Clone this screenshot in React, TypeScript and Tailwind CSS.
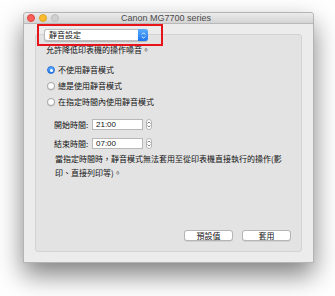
import React from "react";

const cjk = "font-['Noto_Sans_CJK_TC','Noto_Sans',sans-serif]";

function Radio({ checked, label }: { checked?: boolean; label: string }) {
  return (
    <div className="flex items-center h-[16px] gap-[3px] pl-[1px]">
      {checked ? (
        <div className="w-[8px] h-[8px] rounded-full bg-gradient-to-b from-[#5fb0ff] to-[#1c78f0] border border-[#2a6fd6] flex items-center justify-center">
          <div className="w-[3px] h-[3px] rounded-full bg-white" />
        </div>
      ) : (
        <div className="w-[8px] h-[8px] rounded-full bg-white border border-[#a6a6a6] shadow-[0_0.5px_0.5px_rgba(0,0,0,0.15)]" />
      )}
      <span className="text-[8px] leading-[10px] text-[#111]">{label}</span>
    </div>
  );
}

function Stepper() {
  return (
    <div className="w-[6px] h-[11px] rounded-[3px] bg-white border border-[#b5b5b5] flex flex-col items-center justify-center gap-[1px]">
      <svg width="4" height="3" viewBox="0 0 4 3">
        <path d="M0.5 2.5 L2 1 L3.5 2.5" fill="none" stroke="#666" strokeWidth="0.8" />
      </svg>
      <svg width="4" height="3" viewBox="0 0 4 3">
        <path d="M0.5 0.5 L2 2 L3.5 0.5" fill="none" stroke="#666" strokeWidth="0.8" />
      </svg>
    </div>
  );
}

function TimeRow({ label, value }: { label: string; value: string }) {
  return (
    <div className="flex items-center h-[11px] pl-[8px]">
      <span className="w-[38px] text-[8px] leading-[10px] text-[#111]">{label}</span>
      <div className="w-[51px] h-[11px] bg-white border border-[#b8b8b8] flex items-center pl-[3px]">
        <span className="text-[8px] leading-[10px] font-['Liberation_Sans',sans-serif] text-[#111]">{value}</span>
      </div>
      <div className="ml-[3px]">
        <Stepper />
      </div>
    </div>
  );
}

export default function App() {
  return (
    <div className={`w-[335px] h-[296px] bg-white pt-[12px] pl-[23px] overflow-hidden ${cjk}`}>
      <div className="relative w-[291px] h-[251px] bg-[#ececec] border border-[#b4b4b4] rounded-t-[3px] shadow-[0_12px_26px_rgba(0,0,0,0.5)] flex flex-col">
        {/* Title bar */}
        <div className="relative h-[11px] shrink-0 bg-gradient-to-b from-[#ebebeb] to-[#d4d4d4] border-b border-[#b9b9b9] rounded-t-[3px] flex items-center">
          <div className="flex items-center gap-[4px] pl-[3px]">
            <div className="w-[8px] h-[8px] rounded-full bg-[#fc5f57] border border-[#e0443e]" />
            <div className="w-[8px] h-[8px] rounded-full bg-[#fdbc2e] border border-[#dea123]" />
            <div className="w-[8px] h-[8px] rounded-full bg-[#d0d0d0] border border-[#bdbdbd]" />
          </div>
          <div className="flex-1 text-center pr-[40px] text-[9px] leading-[10px] text-[#4a4a4a] font-['Liberation_Sans',sans-serif]">
            Canon MG7700 series
          </div>
        </div>

        {/* Content */}
        <div className="flex-1 flex flex-col px-[11px] pb-[10px]">
          <div className="relative z-10 mt-[5px] pl-[9px] h-[12px]">
            <div className="w-[104px] h-[12px] bg-white rounded-[3px] border border-[#bdbdbd] shadow-[0_0.5px_1px_rgba(0,0,0,0.2)] flex items-center">
              <span className="flex-1 pl-[4px] text-[8px] leading-[10px] text-[#111]">靜音設定</span>
              <div className="w-[10px] h-[12px] -mr-[1px] rounded-r-[3px] bg-gradient-to-b from-[#5aaefd] to-[#1b73ee] flex flex-col items-center justify-center gap-[1px]">
                <svg width="5" height="3" viewBox="0 0 5 3">
                  <path d="M0.8 2.5 L2.5 0.8 L4.2 2.5" fill="none" stroke="#fff" strokeWidth="0.9" />
                </svg>
                <svg width="5" height="3" viewBox="0 0 5 3">
                  <path d="M0.8 0.5 L2.5 2.2 L4.2 0.5" fill="none" stroke="#fff" strokeWidth="0.9" />
                </svg>
              </div>
            </div>
          </div>

          <div className="-mt-[7px] flex-1 bg-[#e3e3e3] border border-[#d3d3d3] rounded-[3px] flex flex-col pt-[10px] pl-[10px] pr-[10px] pb-[10px]">
            <div className="text-[8px] leading-[10px] text-[#111]">允許降低印表機的操作噪音。</div>

            <div className="mt-[7px] flex flex-col">
              <Radio checked label="不使用靜音模式" />
              <Radio label="總是使用靜音模式" />
              <Radio label="在指定時間內使用靜音模式" />
            </div>

            <div className="mt-[9px] flex flex-col gap-[8px]">
              <TimeRow label="開始時間:" value="21:00" />
              <TimeRow label="結束時間:" value="07:00" />
            </div>

            <div className="mt-[3px] ml-[9px] text-[8px] leading-[13.5px] text-[#111] whitespace-nowrap">
              當指定時間時，靜音模式無法套用至從印表機直接執行的操作(影
              <br />
              印、直接列印等)。
            </div>

            <div className="mt-auto flex justify-end gap-[9px]">
              <button className="w-[49px] h-[11px] bg-white border border-[#b5b5b5] rounded-[3px] shadow-[0_0.5px_0.5px_rgba(0,0,0,0.15)] text-[8px] leading-[9px] text-[#111]">
                預設值
              </button>
              <button className="w-[49px] h-[11px] bg-white border border-[#b5b5b5] rounded-[3px] shadow-[0_0.5px_0.5px_rgba(0,0,0,0.15)] text-[8px] leading-[9px] text-[#111]">
                套用
              </button>
            </div>
          </div>
        </div>

        {/* Red annotation box */}
        <div className="absolute left-[13px] top-[11px] w-[126px] h-[22px] border-2 border-[#e8141b] z-20" />
      </div>
    </div>
  );
}
